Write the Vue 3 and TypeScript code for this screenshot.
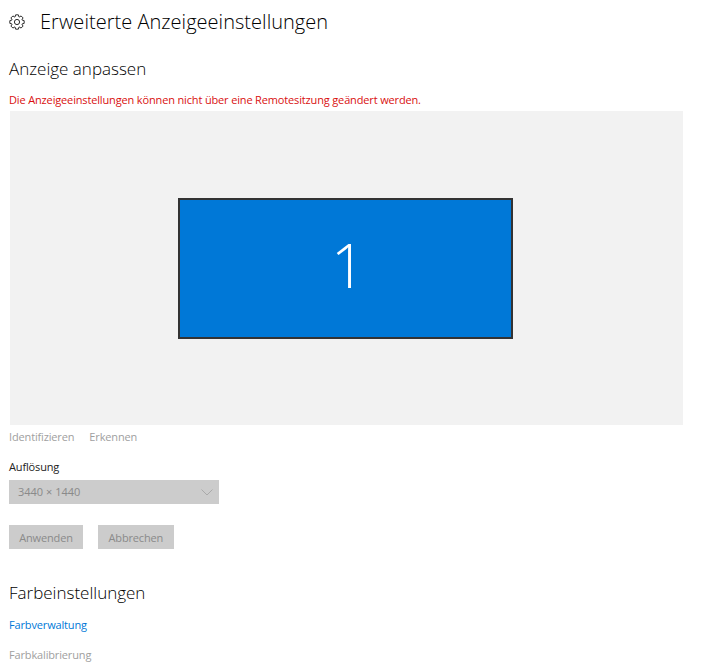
<script setup lang="ts">
const actions: string[] = ['Identifizieren', 'Erkennen']
const buttons: string[] = ['Anwenden', 'Abbrechen']

function gearPath(teeth: number, outer: number, inner: number, c: number): string {
  const step = (Math.PI * 2) / teeth
  const pts: string[] = []
  for (let i = 0; i < teeth; i++) {
    const a = i * step - Math.PI / 2
    const offsets: [number, number][] = [
      [-0.5, inner],
      [-0.27, outer],
      [0.27, outer],
      [0.5, inner],
    ]
    for (const [o, r] of offsets) {
      const t = a + o * step * 0.9
      pts.push(`${(c + r * Math.cos(t)).toFixed(2)} ${(c + r * Math.sin(t)).toFixed(2)}`)
    }
  }
  return `M${pts.join('L')}Z`
}
const gear = gearPath(8, 7.3, 5.5, 8)
</script>

<template>
  <main class="page">
    <header class="title-row">
      <svg class="gear" width="16" height="16" viewBox="0 0 16 16" fill="none" stroke="#2b2b2b" stroke-width="1" stroke-linejoin="round">
        <circle cx="8" cy="8" r="2.600" />
        <path :d="gear" />
      </svg>
      <h1>Erweiterte Anzeigeeinstellungen</h1>
    </header>

    <h2 class="section-first">Anzeige anpassen</h2>
    <p class="error">Die Anzeigeeinstellungen können nicht über eine Remotesitzung geändert werden.</p>

    <section class="canvas">
      <div class="monitor">1</div>
    </section>

    <nav class="actions">
      <span v-for="a in actions" :key="a">{{ a }}</span>
    </nav>

    <label class="res-label">Auflösung</label>
    <div class="select">
      <span>3440 × 1440</span>
      <svg width="12" height="7" viewBox="0 0 12 7" fill="none" stroke="#aaa" stroke-width="1"><path d="M.5.5 6 6l5.500-5.500" /></svg>
    </div>

    <div class="buttons">
      <button v-for="b in buttons" :key="b" type="button" disabled>{{ b }}</button>
    </div>

    <h2 class="section-color">Farbeinstellungen</h2>
    <a class="link">Farbverwaltung</a>
    <a class="link muted">Farbkalibrierung</a>
  </main>
</template>

<style>
html, body { background: #fff; }
</style>

<style scoped>
.page {
  box-sizing: border-box;
  width: 722px;
  height: 667px;
  overflow: hidden;
  padding: 0 0 0 9px;
  font-family: "Open Sans", "Noto Sans", sans-serif;
  color: #000;
  display: flex;
  flex-direction: column;
  align-items: flex-start;
}
.title-row {
  display: flex;
  align-items: center;
  gap: 15px;
  height: 44px;
}
.gear { flex: none; }
h1 {
  margin: 0;
  font-size: 20px;
  font-weight: 300;
  line-height: 44px;
  white-space: nowrap;
  letter-spacing: 0.03px;
}
h2 {
  margin: 0;
  font-size: 17px;
  font-weight: 300;
  line-height: 24px;
}
.section-first { margin-top: 13px; }
.error {
  margin: 11px 0 0;
  font-size: 11px;
  line-height: 16px;
  color: #d90f0f;
  letter-spacing: -0.15px;
}
.canvas {
  margin-top: 3px;
  margin-left: 1px;
  width: 673px;
  height: 314px;
  background: #f2f2f2;
  display: flex;
  flex-direction: column;
  align-items: center;
  padding: 87px 2px 0 0;
  box-sizing: border-box;
}
.monitor {
  box-sizing: border-box;
  width: 335px;
  height: 141px;
  padding: 0 0 7px 5px;
  background: #0078d7;
  border: 2px solid #333;
  color: #fff;
  display: flex;
  align-items: center;
  justify-content: center;
  font-family: "Open Sans", sans-serif;
  font-weight: 300;
  font-size: 60px;
  line-height: 1;
}
.actions {
  display: flex;
  gap: 15px;
  margin-top: 4px;
  font-size: 11px;
  line-height: 16px;
  color: #a0a0a0;
  letter-spacing: -0.15px;
}
.res-label {
  margin-top: 14px;
  font-size: 11px;
  line-height: 16px;
  color: #222;
  letter-spacing: -0.15px;
}
.select {
  box-sizing: border-box;
  margin-top: 5px;
  width: 210px;
  height: 24px;
  background: #ccc;
  display: flex;
  align-items: center;
  justify-content: space-between;
  padding: 0 6px 2px 9px;
  font-size: 11px;
  color: #8a8a8a;
}
.select svg { margin-top: 2px; }
.buttons {
  display: flex;
  gap: 15px;
  margin-top: 21px;
}
button {
  height: 24px;
  border: 0;
  margin: 0;
  padding: 0 10px;
  background: #ccc;
  color: #8a8a8a;
  font: inherit;
  font-size: 11px;
  letter-spacing: -0.15px;
  min-width: 74px;
}
button:last-child { padding: 0 10.500px; }
.section-color { margin-top: 32px; }
.link {
  margin-top: 12px;
  font-size: 11px;
  line-height: 16px;
  color: #0078d7;
  letter-spacing: -0.15px;
}
.link.muted {
  margin-top: 14px;
  color: #a0a0a0;
}
</style>
